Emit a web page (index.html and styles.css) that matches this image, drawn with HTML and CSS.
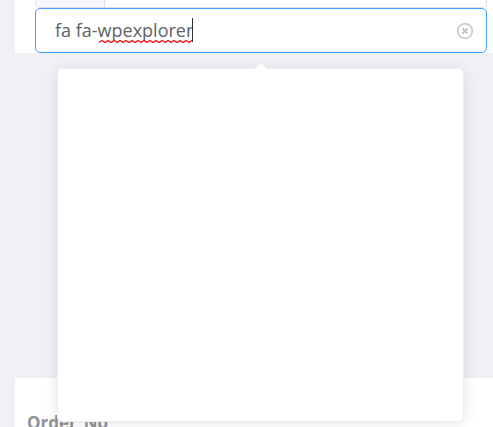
FILE: index.html
```
<!DOCTYPE html>
<html lang="en">
<head>
<meta charset="utf-8">
<title>Icon picker</title>
<link rel="stylesheet" href="styles.css">
</head>
<body>
<main class="page">
  <form class="panel form-panel">
    <div class="field previous-field">
      <span class="prepend"></span>
      <input class="previous-input" type="text" aria-label="Name">
    </div>
    <div class="field icon-field">
      <div class="text-area">
        <input class="icon-input" type="text" aria-label="Icon" value="fa fa-wpexplorer" spellcheck="false">
        <svg class="spelling" width="95" height="26" viewBox="0 0 95 26" aria-hidden="true">
          <defs>
            <pattern id="wave" width="6" height="3" y="22" patternUnits="userSpaceOnUse">
              <path d="M-1 1.5 L0 2.5 L3 .5 L6 2.5 L7 1.5" fill="none" stroke="#f00" stroke-width="1.2"/>
            </pattern>
          </defs>
          <rect y="22" width="94" height="3" fill="url(#wave)"/>
          <path d="M93.5 0V24" stroke="#303133"/>
        </svg>
      </div>
      <button class="clear" type="button" aria-label="Clear">
        <svg width="18" height="18" viewBox="0 0 18 18" fill="none" stroke="#c0c4cc" stroke-width="1.5">
          <circle cx="9" cy="9" r="7.3"/>
          <path d="M6.5 6.5 11.5 11.5M11.5 6.5 6.5 11.5" stroke-width="1.8"/>
        </svg>
      </button>
      <div class="popover" role="dialog" aria-label="Icons">
        <svg class="arrow" width="14" height="7" viewBox="0 0 14 7" aria-hidden="true"><path d="M0 7 6 1Q7 0 8 1L14 7Z" fill="#fff"/></svg>
      </div>
    </div>
  </form>
  <section class="panel table-panel">
    <table>
      <thead><tr><th scope="col">Order_No</th></tr></thead>
    </table>
  </section>
</main>
</body>
</html>
```
FILE: styles.css
```
* {
  box-sizing: border-box;
}

body {
  margin: 0;
  height: 100vh;
  overflow: hidden;
  background: #eff1f6;
  color: #606266;
  font: 18px/24px "Open Sans", "Noto Sans", sans-serif;
}

.page {
  display: flex;
  flex-direction: column;
  height: 100vh;
  padding-left: 15px;
}

.panel {
  background: #fff;
}

.form-panel {
  padding: 0 6px 0 20px;
}

.field {
  display: flex;
  border: 1px solid #dcdfe6;
  border-radius: 5px;
}

.previous-field {
  height: 8px;
  border-top: 0;
  border-radius: 0 0 5px 5px;
  overflow: hidden;
}

.prepend {
  width: 69px;
  flex: none;
  background: #f5f7fa;
  border-right: 1px solid #dcdfe6;
}

.previous-input {
  flex: 1;
  min-width: 0;
  padding: 0;
  border: 0;
  outline: 0;
}

.icon-field {
  position: relative;
  align-items: center;
  height: 45px;
  padding: 0 12px 0 19px;
  border-color: #409eff;
  background: #fff;
}

.text-area {
  position: relative;
  flex: 1;
  min-width: 0;
}

.icon-input {
  display: block;
  width: 100%;
  height: 43px;
  padding: 0 0 2px;
  border: 0;
  outline: 0;
  background: transparent;
  color: inherit;
  font: inherit;
}

.spelling {
  position: absolute;
  left: 44px;
  top: 9px;
}

.clear {
  display: flex;
  padding: 0;
  border: 0;
  background: transparent;
}

.popover {
  position: absolute;
  z-index: 2;
  top: 59px;
  left: 21px;
  right: 22px;
  height: 354px;
  border: 1px solid #ebeef5;
  border-radius: 5px;
  background: #fff;
  box-shadow: 0 2px 15px rgba(0, 0, 0, 0.1);
}

.arrow {
  position: absolute;
  left: calc(50% - 7px);
  top: -6px;
}

.table-panel {
  flex: 1;
  margin-top: 325px;
  padding: 33px 0 0 12px;
}

table {
  border-collapse: collapse;
}

th {
  padding: 0;
  color: #909399;
  text-align: left;
  font-size: 17px;
  font-weight: 700;
}
```
